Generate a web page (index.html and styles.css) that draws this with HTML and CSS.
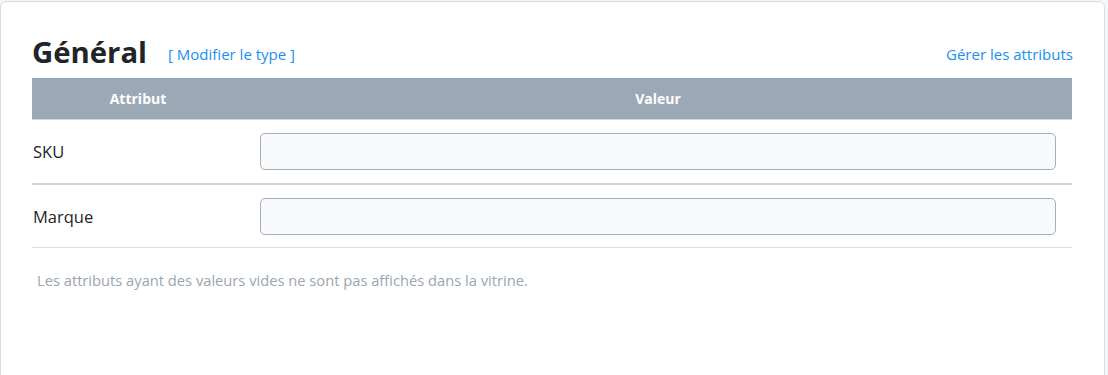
FILE: index.html
```html
<!DOCTYPE html>
<html lang="fr">
<head>
<meta charset="utf-8">
<title>Général</title>
<link rel="stylesheet" href="styles.css">
</head>
<body>
<div class="card">
  <div class="card-head">
    <h2 class="title">Général</h2>
    <a class="link type-link" href="#">[ Modifier le type ]</a>
    <a class="link manage-link" href="#">Gérer les attributs</a>
  </div>
  <table class="attrs">
    <thead>
      <tr><th class="col-name">Attribut</th><th>Valeur</th></tr>
    </thead>
    <tbody>
      <tr class="row-strong"><td class="name">SKU</td><td class="val"><input class="field" type="text"></td></tr>
      <tr class="row-last"><td class="name">Marque</td><td class="val"><input class="field" type="text"></td></tr>
    </tbody>
  </table>
  <p class="note">Les attributs ayant des valeurs vides ne sont pas affichés dans la vitrine.</p>
</div>
</body>
</html>
```
FILE: styles.css
```css
html, body {
  margin: 0;
  padding: 0;
  background: #f5f6f8;
  font-family: "Open Sans", "Noto Sans", sans-serif;
  color: #212529;
  overflow: hidden;
}
.card {
  box-sizing: border-box;
  width: 1105px;
  height: 380px;
  margin-top: 1px;
  background: #fff;
  border: 1px solid #d6dce3;
  border-radius: 6px;
  padding: 30px 31px 0 31px;
}
.card-head {
  display: flex;
  align-items: baseline;
  height: 46px;
}
.title {
  margin: 0;
  font-size: 29.3px;
  font-weight: 700;
  line-height: 40px;
  color: #212529;
}
.link {
  color: #1a8ff0;
  text-decoration: none;
  font-size: 15px;
  position: relative;
  top: -3px;
}
.type-link { margin-left: 21px; }
.manage-link { margin-left: auto; }
.attrs {
  width: 1040px;
  border-collapse: collapse;
  table-layout: fixed;
}
.attrs th {
  background: #9ba9b6;
  color: #fff;
  font-size: 14px;
  font-weight: 700;
  height: 41px;
  padding: 0;
  text-align: center;
  border-bottom: 1px solid #d3d9e0;
}
.attrs .col-name { width: 212px; }
.attrs td {
  padding: 0;
  border-bottom: 1px solid #d8dde3;
}
.attrs .row-strong td { border-bottom: 2px solid #d0d6df; height: 63px; }
.attrs .row-last td { height: 62px; }
.name {
  font-size: 16.5px;
  padding-left: 1px !important;
}
.val {
  padding: 0 16px 0 16px !important;
}
.field {
  display: block;
  box-sizing: border-box;
  width: 100%;
  height: 37px;
  background: #f8f9fa;
  border: 1px solid #a3aebb;
  border-radius: 5px;
  outline: none;
}
.note {
  margin: 22px 0 0 5px;
  font-size: 14.7px;
  color: #9aa5b1;
}
```
